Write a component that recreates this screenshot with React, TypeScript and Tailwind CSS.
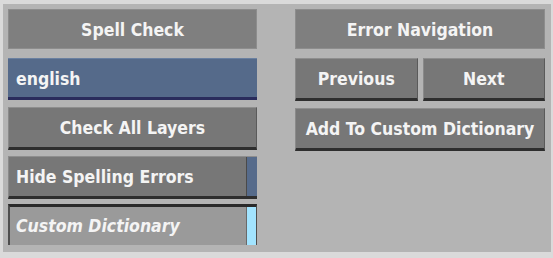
import React from "react";

const font = { fontFamily: '"DejaVu Sans Condensed", "DejaVu Sans", sans-serif' };

function Header({ label }: { label: string }) {
  return (
    <div className="h-[40px] bg-[#7f7f7f] border border-[#8d8d8d] flex items-center justify-center pt-[3px] text-[#f4f4f4] text-[17.5px] font-bold">
      {label}
    </div>
  );
}

function Button({ label, className = "" }: { label: string; className?: string }) {
  return (
    <div
      className={
        "h-[43px] bg-[#777777] border-t border-l border-t-[#8e8e8e] border-l-[#8a8a8a] border-r border-r-[#5a5a5a] border-b-[3px] border-b-[#2e2e2e] flex items-center justify-center pt-[2px] text-[#f4f4f4] text-[17.5px] font-bold " +
        className
      }
    >
      {label}
    </div>
  );
}

export default function App() {
  return (
    <div className="w-[553px] h-[258px] bg-[#dadada] pt-[4px] pl-[3px] pr-[2px] pb-[6px]" style={font}>
      <div className="w-full h-full bg-[#b4b4b4] flex pl-[5px] pt-[5px] gap-[38px]">
        <div className="w-[249px] flex flex-col">
          <Header label="Spell Check" />
          <div className="mt-[9px] h-[42px] bg-[#556a8a] border-t border-t-[#6a80a0] border-b-[3px] border-b-[#2a2c5c] flex items-center pt-[2px] pl-[8px] text-[#f4f4f4] text-[17.5px] font-bold">
            english
          </div>
          <Button label="Check All Layers" className="mt-[7px]" />
          <div className="mt-[6px] h-[43px] bg-[#777777] border-t border-l border-t-[#8e8e8e] border-l-[#8a8a8a] border-b-[3px] border-b-[#2e2e2e] flex text-[#f4f4f4] text-[17.5px] font-bold">
            <div className="flex-1 flex items-center pt-[2px] pl-[7px]">Hide Spelling Errors</div>
            <div className="w-[11px] bg-[#566b8b] border-l border-l-[#4a4a4a]" />
          </div>
          <div className="mt-[5px] h-[41px] bg-[#9a9a9a] border-t-[3px] border-t-[#2a2a2a] border-l-2 border-l-[#4e4e4e] border-r border-r-[#4e4e4e] flex text-[#f4f4f4] text-[17.5px] italic font-bold">
            <div className="flex-1 flex items-center pt-[1px] pl-[6px]">Custom Dictionary</div>
            <div className="w-[10px] bg-[#a2e4ff] border-l border-l-[#6a6a6a]" />
          </div>
        </div>
        <div className="w-[250px] flex flex-col">
          <Header label="Error Navigation" />
          <div className="mt-[9px] flex gap-[5px]">
            <Button label="Previous" className="flex-1 h-[42px]" />
            <Button label="Next" className="flex-1 h-[42px]" />
          </div>
          <Button label="Add To Custom Dictionary" className="mt-[7px]" />
        </div>
      </div>
    </div>
  );
}
